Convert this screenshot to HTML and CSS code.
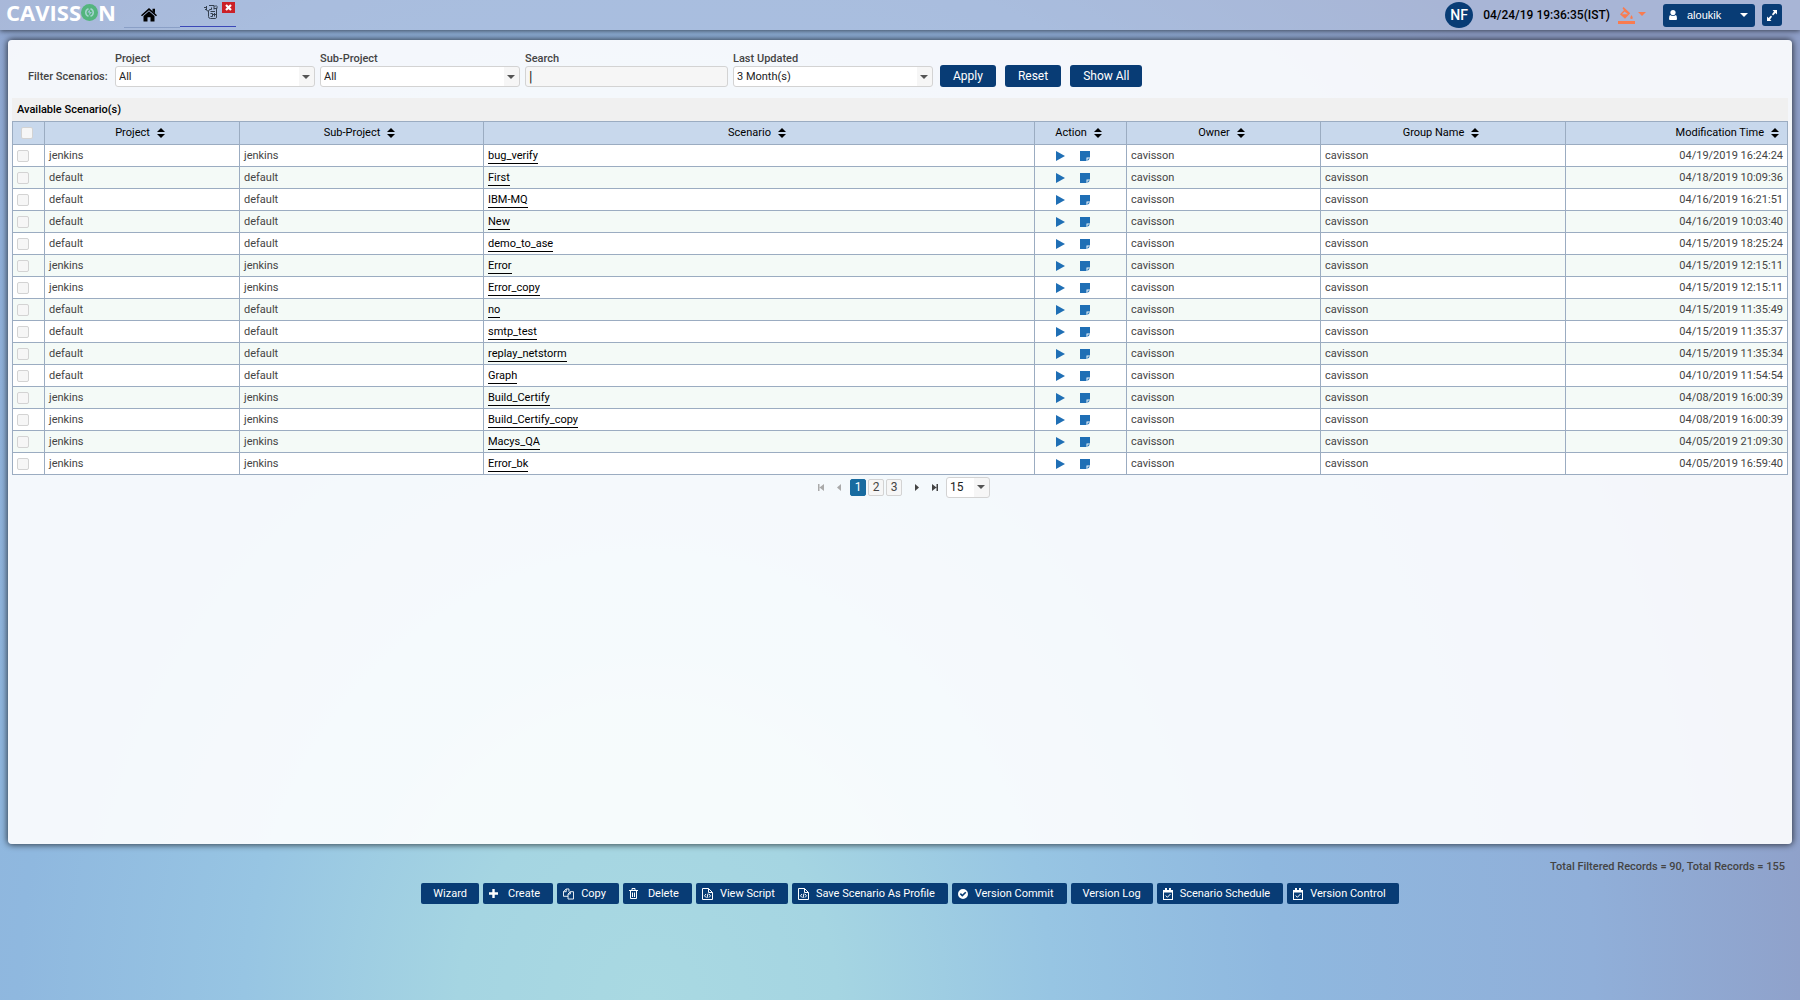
FILE: index.html
```html
<!DOCTYPE html>
<html lang="en">
<head>
<meta charset="utf-8">
<title>Scenarios</title>
<link rel="stylesheet" href="styles.css">
</head>
<body>
<svg class="sprite" width="0" height="0" aria-hidden="true">
  <symbol id="i-sort" viewBox="0 0 8 10"><path d="M0 4 4 0 8 4zM0 6h8L4 10z"/></symbol>
  <symbol id="i-play" viewBox="0 0 9 10"><path d="M0 0 9 5 0 10z"/></symbol>
  <symbol id="i-note" viewBox="0 0 10 10"><path d="M0 0h10v6.500H6.500V10H0zM7.500 7.500H10L7.500 10z"/></symbol>
  <symbol id="i-caret" viewBox="0 0 8 4"><path d="M0 0h8L4 4z"/></symbol>
  <symbol id="i-file" viewBox="0 0 11 12"><path d="M.5.5h6l4 4v7H.5zM6.500.5v4h4M4 6 2.500 7.800 4 9.500M7 6l1.500 1.800L7 9.500M6 5.500l-1 4.500" fill="none" stroke="currentColor"/></symbol>
  <symbol id="i-cal" viewBox="0 0 10 12"><path d="M0 2h10v10H0zM1 4.500V11h8V4.500z" fill-rule="evenodd"/><path d="M2 0h2v3.500H2zM6 0h2v3.500H6z"/><path d="M2.700 7.500 4.400 9.300 7.500 6" fill="none" stroke="currentColor"/></symbol>
</svg>
<header class="topbar">
  <div class="logo" aria-label="Cavisson">CAVISS<svg class="logo-o" viewBox="0 0 17 17"><circle cx="8.500" cy="8.500" r="8.500" fill="#54b57e"/><path d="M7.500 4.700a4 4 0 0 0 0 7.600M9.500 4.700a4 4 0 0 1 0 7.600" fill="none" stroke="#a5d5cf" stroke-width="1.500"/><path d="M8.500 5.500 6.500 8.500h2L8 11.500l3-3.500H9z" fill="#a5c4dc"/></svg>N</div>
  <nav class="tabs">
    <a class="tab" href="#home" aria-label="Home"><svg width="16" height="14" viewBox="0 0 16 14"><path d="M8 0 16 7.200l-1 1.100L8 2.300 1 8.300 0 7.200zM11.500.8H14v4.500l-2.500-2.200zM8 3.300l5.500 4.700v5.500H9.500V9.300h-3v4.200H2.500V8z"/></svg></a>
    <a class="tab active" href="#scenarios" aria-label="Scenarios"><svg class="line" width="14" height="14" viewBox="0 0 14 14"><path d="M4.500 6v5.500a2 2 0 0 0 2 2h5a1.500 1.500 0 0 0 1-1.500V3.500M5 .5h5l1 1 1-1 1 1v2h-3M10 .5v4M0 2.500h2M1 4.500h2M2.500 1v3.500a1.500 1.500 0 0 0 3 0h2V2.500M6.500 6.500H11M6.500 8.500h2v3h-2M10.500 8v3.500M9 9.500h3"/></svg></a>
    <button class="tab-close" aria-label="Close tab"><svg width="7" height="7" viewBox="0 0 7 7"><path d="M1 1 6 6M6 1 1 6" stroke="#fff" stroke-width="2.200"/></svg></button>
  </nav>
  <div class="session">
    <span class="badge">NF</span>
    <span class="clock">04/24/19 19:36:35(IST)</span>
    <button class="theme" aria-label="Theme"><svg width="17" height="17" viewBox="0 0 17 17"><path d="M0 14h17v3H0zM5.500 0l6.700 6.300L7 11.800 2 7.200 6 3.300 4.500 1.300zM6.500 4.500 4 7.200h6z" fill-rule="evenodd"/><path d="M13.500 8q2.500 4 0 4t0-4z"/></svg><svg width="8" height="4"><use href="#i-caret"/></svg></button>
    <button class="user"><svg width="8" height="10" viewBox="0 0 8 10"><circle cx="4" cy="2.600" r="2.600"/><path d="M1 5q3 2 6 0 1 1 1 4 0 1-1 1H1Q0 10 0 9q0-3 1-4z"/></svg><span>aloukik</span><svg width="8" height="4"><use href="#i-caret"/></svg></button>
    <button class="expand" aria-label="Full screen"><svg width="10" height="11" viewBox="0 0 10 11"><path d="M5.500 0H10v4.500L8.500 3 6 5.500 5 4.300 7 1.500zM0 6.500 1.500 8 4 5.500 5 6.700 3 9.500 4.500 11H0z"/></svg></button>
  </div>
</header>
<main class="panel">
  <form class="filters" onsubmit="return false">
    <span class="lead">Filter Scenarios:</span>
    <div class="field"><label for="project">Project</label><span class="select"><select id="project"><option>All</option></select><svg width="8" height="4"><use href="#i-caret"/></svg></span></div>
    <div class="field"><label for="subproject">Sub-Project</label><span class="select"><select id="subproject"><option>All</option></select><svg width="8" height="4"><use href="#i-caret"/></svg></span></div>
    <div class="field search"><label for="search">Search</label><input id="search" type="text" value="|"></div>
    <div class="field"><label for="updated">Last Updated</label><span class="select"><select id="updated"><option>3 Month(s)</option></select><svg width="8" height="4"><use href="#i-caret"/></svg></span></div>
    <div class="actions"><button class="btn">Apply</button><button class="btn">Reset</button><button class="btn">Show All</button></div>
  </form>
  <table class="grid">
    <caption>Available Scenario(s)</caption>
    <colgroup><col class="c-check"><col class="c-project"><col class="c-sub"><col><col class="c-action"><col class="c-owner"><col class="c-group"><col class="c-time"></colgroup>
    <thead><tr>
      <th><input type="checkbox" aria-label="Select all"></th>
      <th>Project<svg class="sort"><use href="#i-sort"/></svg></th>
      <th>Sub-Project<svg class="sort"><use href="#i-sort"/></svg></th>
      <th>Scenario<svg class="sort"><use href="#i-sort"/></svg></th>
      <th>Action<svg class="sort"><use href="#i-sort"/></svg></th>
      <th>Owner<svg class="sort"><use href="#i-sort"/></svg></th>
      <th>Group Name<svg class="sort"><use href="#i-sort"/></svg></th>
      <th class="time">Modification Time<svg class="sort"><use href="#i-sort"/></svg></th>
    </tr></thead>
    <tbody id="rows"></tbody>
  </table>
  <nav class="pager" aria-label="Pages">
    <button class="step off" aria-label="First page"><svg width="6" height="7"><path d="M0 0h1.500v7H0zM6 0v7L1.500 3.500z"/></svg></button>
    <button class="step off" aria-label="Previous page"><svg width="4" height="7"><path d="M4 0v7L0 3.500z"/></svg></button>
    <button class="page current">1</button><button class="page">2</button><button class="page">3</button>
    <button class="step next" aria-label="Next page"><svg width="4" height="7"><path d="M0 0v7l4-3.500z"/></svg></button>
    <button class="step" aria-label="Last page"><svg width="6" height="7"><path d="M4.500 0H6v7H4.500zM0 0v7l4.500-3.500z"/></svg></button>
    <span class="select size"><select aria-label="Rows per page"><option>15</option></select><svg width="8" height="4"><use href="#i-caret"/></svg></span>
  </nav>
</main>
<footer>
  <p class="totals">Total Filtered Records = 90, Total Records = 155</p>
  <div class="tools">
    <button class="tool plain">Wizard</button>
    <button class="tool wide"><svg width="9" height="9" viewBox="0 0 9 9"><path d="M3.300 0h2.400v3.300H9v2.400H5.700V9H3.300V5.700H0V3.300h3.300z"/></svg>Create</button>
    <button class="tool"><svg class="line" width="11" height="12" viewBox="0 0 12 12"><path d="M5.500 8.500h-5V3.500l3-3h3v3M.5 3.500h3v-3M5.500 6l2.500-2.500h3.500v8h-6V6h2.500V3.500"/></svg>Copy</button>
    <button class="tool wide"><svg class="line" width="9" height="11" viewBox="0 0 9 11"><path d="M0 2.500h9M3 2V.500h3V2M1.500 3v7.500h6V3M3.500 4.500V9M5.500 4.500V9"/></svg>Delete</button>
    <button class="tool"><svg width="11" height="12"><use href="#i-file"/></svg>View Script</button>
    <button class="tool"><svg width="11" height="12"><use href="#i-file"/></svg>Save Scenario As Profile</button>
    <button class="tool"><svg width="10" height="10" viewBox="0 0 10 10"><path d="M5 0a5 5 0 1 1 0 10A5 5 0 1 1 5 0zM1.800 5.200 4.300 7.800 8.300 3.800 7.200 2.700 4.300 5.600 2.900 4.100z" fill-rule="evenodd"/></svg>Version Commit</button>
    <button class="tool plain">Version Log</button>
    <button class="tool"><svg width="10" height="12"><use href="#i-cal"/></svg>Scenario Schedule</button>
    <button class="tool"><svg width="10" height="12"><use href="#i-cal"/></svg>Version Control</button>
  </div>
</footer>
<script src="rows.js"></script>
</body>
</html>
```
FILE: rows.js
```js
const scenarios = [
  ["jenkins", "bug_verify", "04/19/2019 16:24:24"],
  ["default", "First", "04/18/2019 10:09:36"],
  ["default", "IBM-MQ", "04/16/2019 16:21:51"],
  ["default", "New", "04/16/2019 10:03:40"],
  ["default", "demo_to_ase", "04/15/2019 18:25:24"],
  ["jenkins", "Error", "04/15/2019 12:15:11"],
  ["jenkins", "Error_copy", "04/15/2019 12:15:11"],
  ["default", "no", "04/15/2019 11:35:49"],
  ["default", "smtp_test", "04/15/2019 11:35:37"],
  ["default", "replay_netstorm", "04/15/2019 11:35:34"],
  ["default", "Graph", "04/10/2019 11:54:54"],
  ["jenkins", "Build_Certify", "04/08/2019 16:00:39"],
  ["jenkins", "Build_Certify_copy", "04/08/2019 16:00:39"],
  ["jenkins", "Macys_QA", "04/05/2019 21:09:30"],
  ["jenkins", "Error_bk", "04/05/2019 16:59:40"]
];
document.getElementById("rows").innerHTML = scenarios.map(([project, name, time]) => `
<tr>
  <td class="check"><input type="checkbox" aria-label="Select ${name}"></td>
  <td>${project}</td>
  <td>${project}</td>
  <td><a href="#${name}">${name}</a></td>
  <td><div class="row-actions"><button aria-label="Run ${name}"><svg width="9" height="10"><use href="#i-play"/></svg></button><button aria-label="Notes for ${name}"><svg width="10" height="10"><use href="#i-note"/></svg></button></div></td>
  <td>cavisson</td>
  <td>cavisson</td>
  <td class="time">${time}</td>
</tr>`).join("");
```
FILE: styles.css
```css
* { box-sizing: border-box; }
body {
  margin: 0;
  min-height: 100vh;
  font: 11px/16px Roboto, sans-serif;
  color: #444;
  background: radial-gradient(ellipse 70% 140% at 36% 100%, #a9d9e2 0%, #a5d5e2 15%, #97c5e3 32%, #8fb8df 50%, #90afd9 75%, #8f9fc8 95%);
}
button, input, select { font: inherit; color: inherit; margin: 0; }
button { border: 0; padding: 0; background: none; }
svg { fill: currentColor; display: block; flex: none; }
.line { fill: none; stroke: currentColor; }
.sprite { position: absolute; }

.topbar {
  display: flex;
  align-items: center;
  height: 30px;
  padding: 0 18px 0 6px;
  background: rgba(193, 204, 228, .5);
  box-shadow: 0 1px 5px rgba(0, 0, 0, .6);
}
.logo {
  display: flex;
  align-items: center;
  align-self: flex-start;
  width: 118px;
  height: 25px;
  font: 700 22px/25px "Open Sans", sans-serif;
  color: #fff;
}
.logo-o { width: 17px; height: 17px; }
.tabs { display: flex; align-self: flex-start; position: relative; }
.tab {
  display: flex;
  justify-content: center;
  width: 56px;
  height: 28px;
  padding: 8px 6px 0 0;
  color: #000;
  border-bottom: 1px solid #8a9fc6;
}
.tab.active { height: 27px; padding: 5px 0 0 6px; color: #34404f; border-color: #3b48b8; }
.tab-close {
  position: absolute;
  top: 2px;
  right: 1px;
  display: grid;
  place-items: center;
  width: 13px;
  height: 11px;
  background: #cb2027;
}
.session { display: flex; align-items: center; margin-left: auto; height: 30px; }
.badge {
  width: 28px;
  height: 26px;
  border-radius: 50%;
  font: 500 14px/26px Roboto, sans-serif;
  text-align: center;
  color: #fff;
  background: #083c75;
}
.clock { margin: 0 8px 0 10px; font-size: 12px; font-weight: 500; color: #000; }
.theme { display: flex; gap: 3px; color: #f97c50; }
.theme svg:last-child { margin-top: 5px; }
.user {
  display: flex;
  align-items: center;
  width: 92px;
  height: 23px;
  margin: 0 7px 0 17px;
  padding: 0 7px 0 6px;
  border-radius: 3px;
  font-family: "Liberation Sans", sans-serif;
  color: #fff;
  background: #083c75;
}
.user span { margin: 0 auto 0 10px; }
.expand {
  display: grid;
  place-items: center;
  width: 20px;
  height: 22px;
  border-radius: 3px;
  color: #fff;
  background: #083c75;
}

.panel {
  min-height: calc(100vh - 196px);
  margin: 10px 8px 0;
  padding: 12px 4px 0;
  border-radius: 4px;
  background: rgba(255, 255, 255, .9);
  box-shadow: 0 0 6px 1px rgba(0, 0, 0, .65);
}
.filters { display: flex; align-items: flex-end; gap: 5px; padding: 0 16px 11px; }
.lead { width: 82px; font-weight: 500; line-height: 20px; }
.field { display: flex; flex-direction: column; width: 200px; }
.field.search { width: 203px; }
.field label { line-height: 14px; font-weight: 500; }
.field input {
  height: 21px;
  padding: 0 3px;
  border: 1px solid #d3d3d3;
  border-radius: 3px;
  font-size: 14px;
  color: #222;
  background: #f6f6f6;
}
.select {
  display: flex;
  align-items: center;
  position: relative;
  height: 21px;
  border: 1px solid #d3d3d3;
  border-radius: 3px;
  color: #222;
  background: linear-gradient(#f6f6f6, #f6f6f6) right / 15px 100% no-repeat #fff;
}
.select select {
  appearance: none;
  width: 100%;
  height: 19px;
  padding: 0 3px;
  border: 0;
  background: none;
}
.select svg { position: absolute; right: 4px; color: #555; }
.actions { display: flex; gap: 9px; margin-left: 2px; }
.btn {
  height: 22px;
  padding: 0 13px;
  border-radius: 3px;
  font-size: 12px;
  color: #fff;
  background: #083c75;
}

.grid { width: 100%; table-layout: fixed; border-collapse: collapse; }
.grid caption {
  height: 23px;
  padding: 0 5px;
  text-align: left;
  font-weight: 500;
  line-height: 23px;
  color: #000;
  background: #f0f0f0;
}
.c-check { width: 32px; }
.c-project { width: 195px; }
.c-sub { width: 244px; }
.c-action { width: 92px; }
.c-owner { width: 194px; }
.c-group { width: 245px; }
.c-time { width: 222px; }
.grid th, .grid td { height: 22px; padding: 0 4px; border: 1px solid #9bacc1; line-height: 20px; }
.grid th { height: 23px; font-weight: 400; color: #000; background: #c8d8ec; }
.grid td { background: #fff; }
.grid tr:nth-child(even) td { background: #f4faf7; }
.grid .time { text-align: right; }
.grid input {
  appearance: none;
  display: block;
  width: 12px;
  height: 12px;
  margin: 0;
  border: 1px solid #d3d3d3;
  border-radius: 2px;
  background: #f6f6f6;
}
.grid th input { margin-left: 4px; }
.grid a { display: inline-block; height: 16px; line-height: 16px; vertical-align: middle; color: #000; text-decoration: none; border-bottom: 1px solid #000; }
.sort { display: inline-block; width: 8px; height: 10px; margin: 0 4px 0 7px; vertical-align: -2px; }
.row-actions { display: flex; gap: 15px; padding-left: 17px; color: #1f6fb5; }

.pager { display: flex; align-items: center; justify-content: center; height: 24px; padding-left: 2px; }
.step { display: grid; place-items: center; width: 18px; height: 16px; color: #444; }
.step.off { color: #aaa; }
.step.next { margin-left: 6px; }
.page {
  width: 16px;
  height: 17px;
  margin-left: 2px;
  border: 1px solid #d3d3d3;
  border-radius: 2px;
  font-size: 12px;
  line-height: 15px;
  background: #f6f6f6;
}
.page.current { border-color: #186ba0; color: #fff; background: #186ba0; }
.select.size { width: 44px; margin-left: 2px; font-size: 12px; }

.totals { margin: 0; padding: 15px 15px 0 0; text-align: right; font-weight: 500; }
.tools { display: flex; justify-content: center; gap: 4px; padding: 8px 0 0 20px; }
.tool {
  display: flex;
  align-items: center;
  gap: 7px;
  height: 21px;
  padding: 0 13px 0 6px;
  border-radius: 2px;
  color: #fff;
  background: #083c75;
}
.tool.plain { padding: 0 12px; }
.tool.wide { gap: 10px; }
```
